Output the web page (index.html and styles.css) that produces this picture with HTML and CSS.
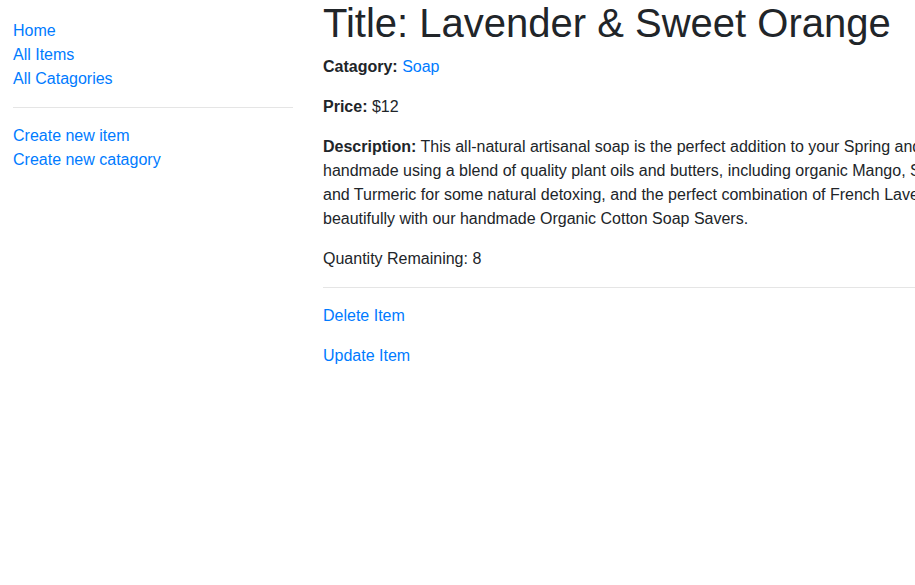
FILE: index.html
```html
<!DOCTYPE html>
<html lang="en">
<head>
<meta charset="utf-8">
<title>Lavender &amp; Sweet Orange</title>
<link rel="stylesheet" href="styles.css">
</head>
<body>
<div class="layout">
  <nav class="sidebar">
    <ul class="nav-list">
      <li><a href="#">Home</a></li>
      <li><a href="#">All Items</a></li>
      <li><a href="#">All Catagories</a></li>
    </ul>
    <hr class="rule">
    <ul class="nav-list">
      <li><a href="#">Create new item</a></li>
      <li><a href="#">Create new catagory</a></li>
    </ul>
  </nav>
  <main class="main">
    <h1 class="title">Title: Lavender &amp; Sweet Orange</h1>
    <p><strong>Catagory:</strong> <a href="#">Soap</a></p>
    <p><strong>Price:</strong> $12</p>
    <p class="desc"><strong>Description:</strong> This all-natural artisanal soap is the perfect addition to your Spring and Summer routine. It is<br>handmade using a blend of quality plant oils and butters, including organic Mango, Shea and Cocoa Butters,<br>and Turmeric for some natural detoxing, and the perfect combination of French Lavender and Sweet Orange. Pairs<br>beautifully with our handmade Organic Cotton Soap Savers.</p>
    <p>Quantity Remaining: 8</p>
    <hr class="rule">
    <p><a href="#">Delete Item</a></p>
    <p><a href="#">Update Item</a></p>
  </main>
</div>
</body>
</html>
```
FILE: styles.css
```css
html, body {
  margin: 0;
  overflow: hidden;
}
body {
  font-family: "Liberation Sans", Arial, sans-serif;
  font-size: 16px;
  line-height: 1.5;
  color: #212529;
  background: #fff;
}
a {
  color: #007bff;
  text-decoration: none;
}
strong { font-weight: 700; }
.layout {
  display: flex;
  align-items: flex-start;
  width: 1300px;
}
.sidebar {
  width: 280px;
  margin-left: 13px;
  padding-top: 19px;
  flex: none;
}
.nav-list {
  list-style: none;
  margin: 0;
  padding: 0;
}
.rule {
  border: 0;
  border-top: 1px solid rgba(0,0,0,.1);
  margin: 16px 0;
  height: 0;
}
.main {
  margin-left: 30px;
  width: 960px;
  flex: none;
}
.title {
  font-size: 40px;
  font-weight: 500;
  line-height: 1.2;
  margin: -1px 0 8px;
  white-space: nowrap;
}
.main p {
  margin: 0 0 16px;
  white-space: nowrap;
}
```
